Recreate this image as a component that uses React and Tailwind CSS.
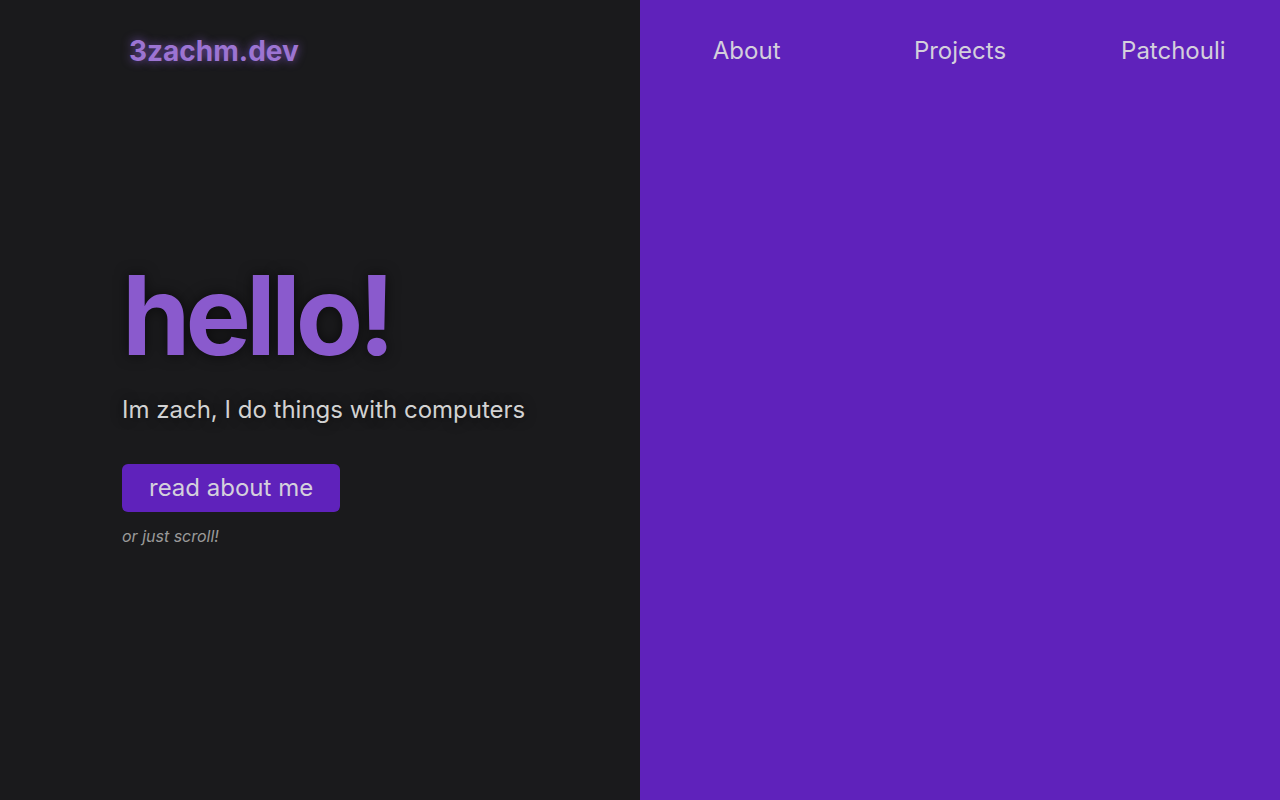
export default function App() {
  const font = { fontFamily: "Inter, 'Noto Sans', sans-serif" };
  return (
    <div className="grid grid-cols-2 w-full h-[800px] overflow-hidden" style={font}>
      <div className="bg-[#1a1a1c] flex flex-col">
        <header className="h-[101px] flex items-center pl-[129px]">
          <a className="text-[28px] font-bold text-[#9c74d2] [text-shadow:0_0_10px_rgba(150,100,230,0.7)]">
            3zachm.dev
          </a>
        </header>
        <section className="pl-[122px] mt-[159px]">
          <h1 className="text-[110px] leading-none font-bold text-[#8a5acd] tracking-[-0.045em] [text-shadow:0_0_14px_rgba(0,0,0,0.6)]">
            hello!
          </h1>
          <p className="mt-[24px] text-[24px] leading-8 text-[#d2d2d2] [text-shadow:0_0_12px_rgba(0,0,0,0.6)]">
            Im zach, I do things with computers
          </p>
          <button className="mt-[38px] h-12 px-[27px] rounded-md bg-[#5f22bb] text-[24px] leading-8 text-[#d4d0dc]">
            read about me
          </button>
          <p className="mt-3 text-[16px] leading-6 italic text-[#9a9a9a]">or just scroll!</p>
        </section>
      </div>
      <div className="bg-[#5f22bb]">
        <nav className="h-[101px] grid grid-cols-3 items-center text-center text-[24px] text-[#d4cfdc]">
          <a>About</a>
          <a>Projects</a>
          <a>Patchouli</a>
        </nav>
      </div>
    </div>
  );
}
